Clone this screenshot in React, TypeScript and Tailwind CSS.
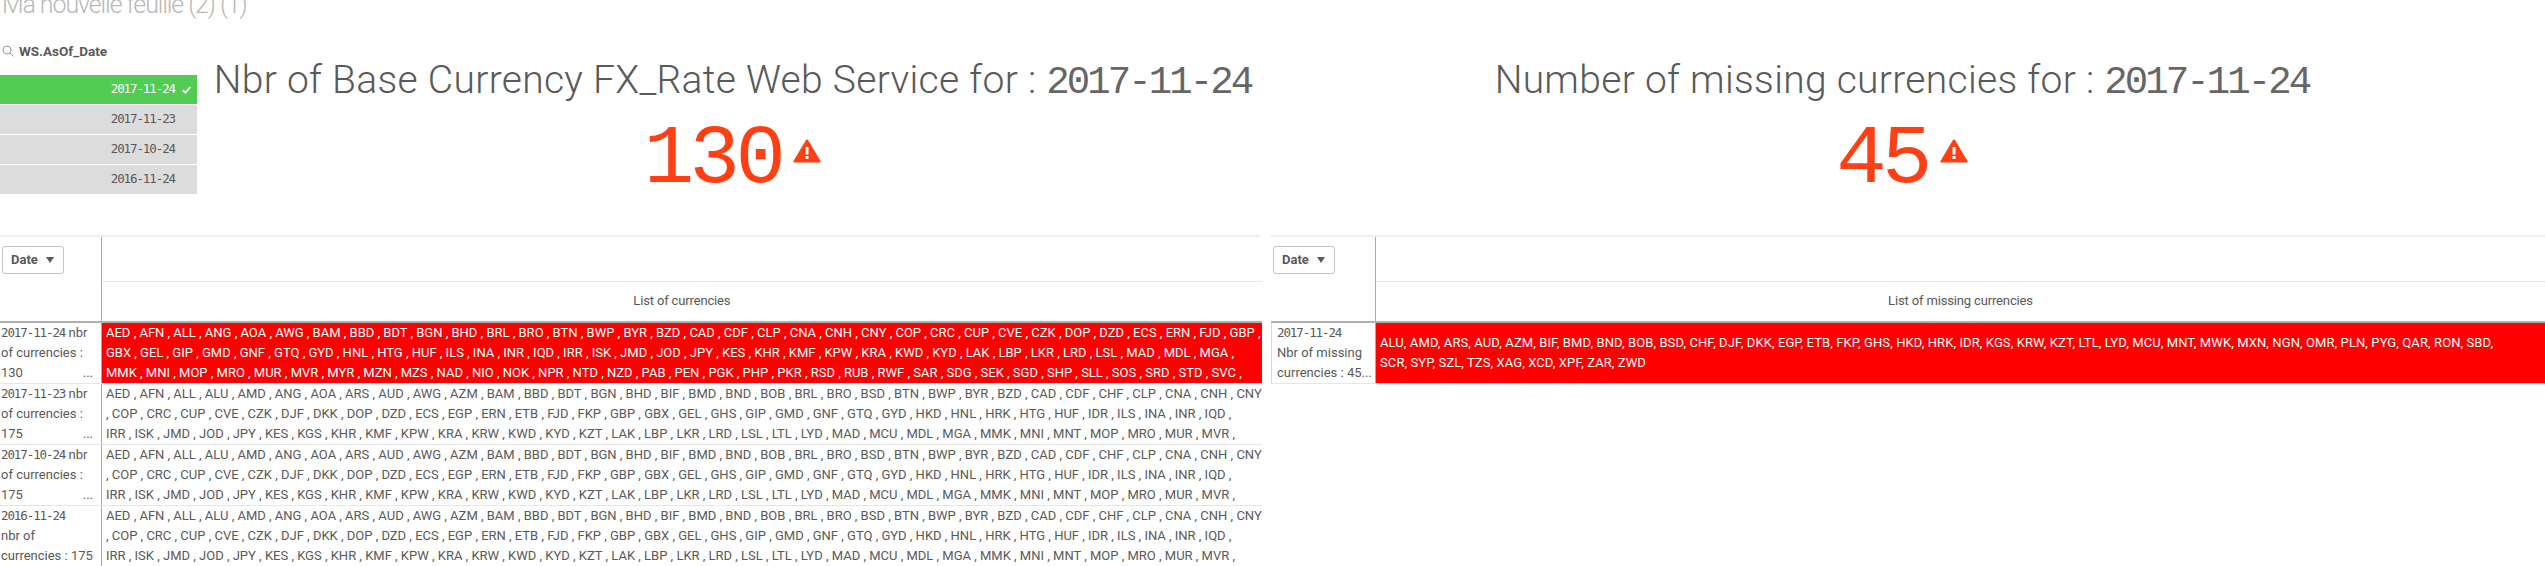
const mono = "font-['DejaVu_Sans_Mono',monospace]"
const displayMono = "font-['Liberation_Mono',monospace]"

const dates = ['2017-11-24', '2017-11-23', '2017-10-24', '2016-11-24']

const selectedList = [
  'AED , AFN , ALL , ANG , AOA , AWG , BAM , BBD , BDT , BGN , BHD , BRL , BRO , BTN , BWP , BYR , BZD , CAD , CDF , CLP , CNA , CNH , CNY , COP , CRC , CUP , CVE , CZK , DOP , DZD , ECS , ERN , FJD , GBP ,',
  'GBX , GEL , GIP , GMD , GNF , GTQ , GYD , HNL , HTG , HUF , ILS , INA , INR , IQD , IRR , ISK , JMD , JOD , JPY , KES , KHR , KMF , KPW , KRA , KWD , KYD , LAK , LBP , LKR , LRD , LSL , MAD , MDL , MGA ,',
  'MMK , MNI , MOP , MRO , MUR , MVR , MYR , MZN , MZS , NAD , NIO , NOK , NPR , NTD , NZD , PAB , PEN , PGK , PHP , PKR , RSD , RUB , RWF , SAR , SDG , SEK , SGD , SHP , SLL , SOS , SRD , STD , SVC ,',
]

const fullList = [
  'AED , AFN , ALL , ALU , AMD , ANG , AOA , ARS , AUD , AWG , AZM , BAM , BBD , BDT , BGN , BHD , BIF , BMD , BND , BOB , BRL , BRO , BSD , BTN , BWP , BYR , BZD , CAD , CDF , CHF , CLP , CNA , CNH , CNY',
  ', COP , CRC , CUP , CVE , CZK , DJF , DKK , DOP , DZD , ECS , EGP , ERN , ETB , FJD , FKP , GBP , GBX , GEL , GHS , GIP , GMD , GNF , GTQ , GYD , HKD , HNL , HRK , HTG , HUF , IDR , ILS , INA , INR , IQD ,',
  'IRR , ISK , JMD , JOD , JPY , KES , KGS , KHR , KMF , KPW , KRA , KRW , KWD , KYD , KZT , LAK , LBP , LKR , LRD , LSL , LTL , LYD , MAD , MCU , MDL , MGA , MMK , MNI , MNT , MOP , MRO , MUR , MVR ,',
]

const missingList = [
  'ALU, AMD, ARS, AUD, AZM, BIF, BMD, BND, BOB, BSD, CHF, DJF, DKK, EGP, ETB, FKP, GHS, HKD, HRK, IDR, KGS, KRW, KZT, LTL, LYD, MCU, MNT, MWK, MXN, NGN, OMR, PLN, PYG, QAR, RON, SBD,',
  'SCR, SYP, SZL, TZS, XAG, XCD, XPF, ZAR, ZWD',
]

function WarningIcon() {
  return (
    <svg width="28" height="24" viewBox="0 0 28 24" className="ml-[12px] mb-[44px] shrink-0">
      <path
        fillRule="evenodd"
        fill="#ff4015"
        d="M14 0.5c.5 0 .9.3 1.2.8l12.3 20.6c.5.8 0 1.6-.9 1.6H1.4c-.9 0-1.4-.8-.9-1.6L12.8 1.3c.3-.5.7-.8 1.2-.8zM12.5 8v7.5h3V8zM12.5 17v3h3v-3z"
      />
    </svg>
  )
}

function Kpi({ title, date, value }: { title: string; date: string; value: string }) {
  return (
    <div className="flex-1 flex flex-col items-center pt-[32px]">
      <div className="h-[61px] text-[39px] leading-[56px] whitespace-nowrap text-[#595959] font-['Roboto',sans-serif] font-light tracking-[0.3px]">
        {title} <span className={`${displayMono} text-[39px] tracking-[-2.9px] font-normal text-[#666666]`}>{date}</span>
      </div>
      <div className="flex items-end h-[94px] text-[#ff4015]">
        <span className={`${displayMono} text-[84px] leading-[94px] tracking-[-4.6px]`}>{value}</span>
        <WarningIcon />
      </div>
    </div>
  )
}

function DateButton() {
  return (
    <div className="w-[62px] h-[28px] mt-[9px] ml-[2px] flex items-center gap-[8px] pl-[8px] border border-[#c4c4c4] rounded-[3px] text-[13px] font-bold text-[#595959]">
      Date
      <span className="w-0 h-0 border-x-[4.5px] border-x-transparent border-t-[6px] border-t-[#595959]" />
    </div>
  )
}

function HeaderCells({ label }: { label: string }) {
  return (
    <div className="h-[86px] border-b-2 border-[#b0b0b0] grid grid-cols-subgrid col-span-2">
      <div className="border-r border-[#a8a8a8]">
        <DateButton />
      </div>
      <div className="flex flex-col">
        <div className="h-[45px] border-b border-[#e6e6e6]" />
        <div className="flex-1 flex items-center justify-center text-[13px] tracking-[-0.15px] text-[#595959] pb-[1px]">{label}</div>
      </div>
    </div>
  )
}

function Row({ date, lines, list, highlighted, more }: { date: string; lines: [string, string, string]; list: string[]; highlighted?: boolean; more?: boolean }) {
  return (
    <div className="h-[61px] grid grid-cols-subgrid col-span-2 border-b border-[#e6e6e6] text-[13px] leading-[20px] overflow-hidden">
      <div className="border-r border-[#a8a8a8] pl-[1px] pr-[8px] whitespace-nowrap text-[#595959] overflow-hidden">
        <div>
          <span className={`${mono} text-[12.5px] tracking-[-1.1px]`}>{date}</span>
          {lines[0] && <span> {lines[0]}</span>}
        </div>
        <div>{lines[1]}</div>
        <div className="flex justify-between">
          <span>{lines[2]}</span>
          {more && <span>...</span>}
        </div>
      </div>
      <div className={`pl-[4px] whitespace-nowrap ${highlighted ? 'bg-[#ff0000] text-white' : 'text-[#595959]'}`}>
        {list.map((line) => (
          <div key={line}>{line}</div>
        ))}
      </div>
    </div>
  )
}

export default function App() {
  return (
    <div className="w-[2545px] h-[566px] overflow-hidden bg-white font-['Roboto',sans-serif]">
      <div className="h-[28px] -mt-[8px] pt-[1px] pl-[2px] text-[25px] leading-[24px] font-light text-[#b8b8b8] whitespace-nowrap tracking-[-1.1px]">
        Ma nouvelle feuille (2) (1)
      </div>

      <div className="flex h-[215px]">
        <div className="w-[197px] shrink-0">
          <div className="flex items-center h-[55px] pt-[7px] pl-[2px] gap-[5px] text-[13.5px] font-bold text-[#595959]">
            <svg width="12" height="12" viewBox="0 0 12 12" fill="none" stroke="#9a9a9a" strokeWidth="1">
              <circle cx="5" cy="5" r="4" />
              <path d="M8 8l3.5 3.5" />
            </svg>
            WS.AsOf_Date
          </div>
          <div className="flex flex-col gap-[1px]">
            {dates.map((date, i) => (
              <div
                key={date}
                className={`h-[29px] flex items-center justify-end ${i === 0 ? 'bg-[#52cc52] text-white' : 'bg-[#dcdcdc] text-[#595959]'}`}
              >
                <span className={`${mono} text-[12.5px] tracking-[-1.1px]`}>{date}</span>
                <span className="w-[22px] flex justify-center">
                  {i === 0 && (
                    <svg width="9" height="8" viewBox="0 0 9 8" fill="none" stroke="white" strokeWidth="1.8">
                      <path d="M.8 4.2l2.6 2.6L8.3 1" />
                    </svg>
                  )}
                </span>
              </div>
            ))}
          </div>
        </div>
        <div className="w-[1071px] shrink-0">
          <Kpi title="Nbr of Base Currency FX_Rate Web Service for :" date="2017-11-24" value="130" />
        </div>
        <div className="w-[1268px] shrink-0">
          <Kpi title="Number of missing currencies for :" date="2017-11-24" value="45" />
        </div>
      </div>

      <div className="flex gap-[11px]">
        <div className="w-[1260px] shrink-0 grid grid-cols-[102px_1fr] border-t-2 border-[#efefef]">
          <HeaderCells label="List of currencies" />
          <Row date="2017-11-24" lines={['nbr', 'of currencies :', '130']} list={selectedList} highlighted more />
          <Row date="2017-11-23" lines={['nbr', 'of currencies :', '175']} list={fullList} more />
          <Row date="2017-10-24" lines={['nbr', 'of currencies :', '175']} list={fullList} more />
          <Row date="2016-11-24" lines={['', 'nbr of', 'currencies : 175']} list={fullList} />
        </div>
        <div className="flex-1 grid grid-cols-[105px_1fr] border-t-2 border-[#efefef] self-start">
          <HeaderCells label="List of missing currencies" />
          <div className="h-[61px] grid grid-cols-subgrid col-span-2 border-b border-[#e6e6e6] text-[13px] leading-[20px]">
            <div className="border-x border-[#d8d8d8] border-r-[#a8a8a8] pl-[5px] whitespace-nowrap text-[#595959]">
              <div className={`${mono} text-[12.5px] tracking-[-1.1px]`}>2017-11-24</div>
              <div>Nbr of missing</div>
              <div>currencies : 45...</div>
            </div>
            <div className="bg-[#ff0000] text-white pl-[4px] flex flex-col justify-center whitespace-nowrap tracking-[0.1px]">
              {missingList.map((line) => (
                <div key={line}>{line}</div>
              ))}
            </div>
          </div>
        </div>
      </div>
    </div>
  )
}
